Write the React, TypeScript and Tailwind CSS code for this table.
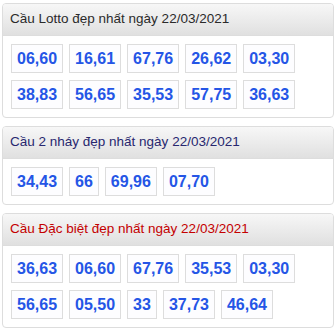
const PANELS = [
  {
    title: "Cầu Lotto đẹp nhất ngày 22/03/2021",
    color: "text-[#2a2a2a]",
    nums: ["06,60", "16,61", "67,76", "26,62", "03,30", "38,83", "56,65", "35,53", "57,75", "36,63"],
  },
  {
    title: "Cầu 2 nháy đẹp nhất ngày 22/03/2021",
    color: "text-[#27276f]",
    nums: ["34,43", "66", "69,96", "07,70"],
  },
  {
    title: "Cầu Đặc biệt đẹp nhất ngày 22/03/2021",
    color: "text-[#c40000]",
    nums: ["36,63", "06,60", "67,76", "35,53", "03,30", "56,65", "05,50", "33", "37,73", "46,64"],
  },
];

export default function App() {
  return (
    <div className="w-[336px] h-[332px] bg-white px-[2px] pt-[3px] flex flex-col gap-[8px] font-['Liberation_Sans',Arial,sans-serif]">
      {PANELS.map((p) => (
        <div key={p.title} className="border border-[#dddddd] rounded-[4px] overflow-hidden">
          <div className={`h-[32px] flex items-center pl-[7px] text-[13.5px] border-b border-[#dddddd] bg-gradient-to-b from-[#f7f7f7] to-[#e0e0e0] ${p.color}`}>
            {p.title}
          </div>
          <div className="flex flex-wrap gap-x-[6px] gap-y-[7px] p-[8px]">
            {p.nums.map((n, i) => (
              <div key={i} className="h-[29px] px-[5px] flex items-center border border-[#dddddd] bg-[#fdfdff] text-[16px] font-bold text-[#2455e6]">
                {n}
              </div>
            ))}
          </div>
        </div>
      ))}
    </div>
  );
}
